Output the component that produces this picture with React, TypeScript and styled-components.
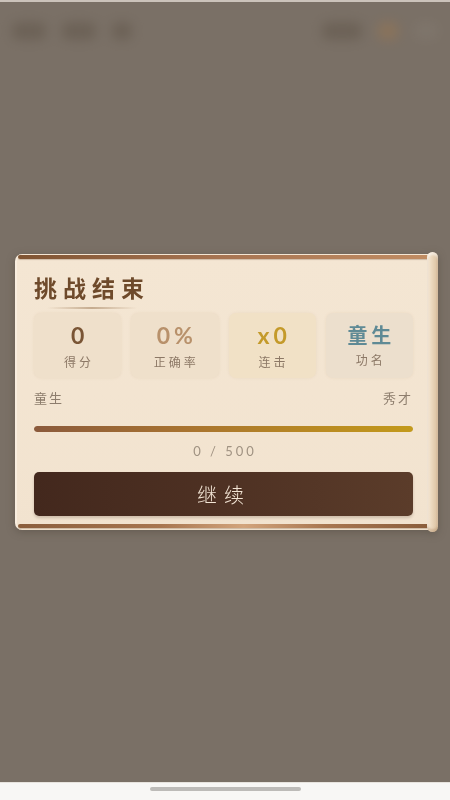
import React from 'react';
import styled, {createGlobalStyle} from "styled-components";

const GlobalStyle = createGlobalStyle`
  html, body {
    margin: 0;
    padding: 0;
    height: 100%;
  }
  body {
    font-family: "Noto Sans CJK SC", "Noto Sans", sans-serif;
  }
  #root {
    height: 100%;
  }
`

const stats = [
    {value: '0', label: '得分', color: '#7a5535', tint: '#efe0cb', big: false},
    {value: '0%', label: '正确率', color: '#b8916b', tint: '#efe0cb', big: false},
    {value: 'x0', label: '连击', color: '#c49a2a', tint: '#f1e1c6', big: false},
    {value: '童生', label: '功名', color: '#5f8a95', tint: '#ecdfcd', big: true},
]

const App = () => {
    return (
        <>
            <GlobalStyle/>
            <Screen>
                <Stage>
                    <BlurHeader>
                        <Blob w={34}/>
                        <Blob w={34}/>
                        <Blob w={20}/>
                        <Spacer/>
                        <Blob w={40}/>
                        <Blob w={20} warm/>
                        <Blob w={24} faint/>
                    </BlurHeader>
                    <Scroll>
                        <Paper>
                            <Rod/>
                            <Content>
                                <Title>挑战结束</Title>
                                <Divider/>
                                <StatGrid>
                                    {stats.map(s => (
                                        <StatBox key={s.label} tint={s.tint}>
                                            <StatValue color={s.color} big={s.big}>{s.value}</StatValue>
                                            <StatLabel big={s.big}>{s.label}</StatLabel>
                                        </StatBox>
                                    ))}
                                </StatGrid>
                                <RankRow>
                                    <span>童生</span>
                                    <span>秀才</span>
                                </RankRow>
                                <Progress>
                                    <ProgressFill/>
                                </Progress>
                                <Count>0 / 500</Count>
                                <ContinueButton>继续</ContinueButton>
                            </Content>
                            <Rod bottom/>
                        </Paper>
                        <Roller/>
                    </Scroll>
                </Stage>
                <HomeBar>
                    <Indicator/>
                </HomeBar>
            </Screen>
        </>
    );
};

export default App;

const Screen = styled.div`
  display: flex;
  flex-direction: column;
  height: 100vh;
  width: 100%;
  overflow: hidden;
`
const Stage = styled.main`
  flex: 1;
  display: grid;
  background: #7a7066;
  border-top: 2px solid #cbc3bb;
  & > * {
    grid-area: 1 / 1;
  }
`
const BlurHeader = styled.div`
  align-self: start;
  display: flex;
  align-items: center;
  gap: 16px;
  height: 22px;
  margin-top: 18px;
  padding: 0 12px;
  filter: blur(6px);
  opacity: 0.5;
`
const Blob = styled.div<{ w: number, warm?: boolean, faint?: boolean }>`
  width: ${p => p.w}px;
  height: 18px;
  border-radius: 6px;
  background: ${p => p.warm ? '#9a7650' : p.faint ? '#837a70' : '#5f5448'};
`
const Spacer = styled.div`
  flex: 1;
`
const Scroll = styled.div`
  align-self: center;
  justify-self: start;
  display: flex;
  width: 423px;
  margin-left: 15px;
  filter: drop-shadow(0 2px 4px rgba(40, 30, 20, 0.25));
`
const Paper = styled.div`
  flex: 1;
  display: flex;
  flex-direction: column;
  background: linear-gradient(180deg, #f4e6d3 0%, #f2e3cf 100%);
  border-radius: 7px 0 0 7px;
  border-left: 2px solid #f8eddf;
  padding: 1px 0 2px 0;
`
const Rod = styled.div<{ bottom?: boolean }>`
  height: 4px;
  margin-left: 1px;
  border-radius: 2px 0 0 2px;
  background: ${p => p.bottom
          ? 'linear-gradient(90deg, #8b5e3c 0%, #a87650 35%, #d2a47c 55%, #a87650 75%, #8b5e3c 100%)'
          : 'linear-gradient(90deg, #7f5432 0%, #a77552 50%, #c08c62 100%)'};
  box-shadow: 0 1px 1px rgba(90, 60, 30, 0.25);
`
const Roller = styled.div`
  width: 11px;
  margin: -2px 0 -2px -1px;
  border-radius: 6px;
  background: linear-gradient(90deg, #f6ead9 0%, #ecd9bf 40%, #e0c8a9 80%, #d0b492 100%);
  box-shadow: inset 0 3px 2px rgba(255, 255, 255, 0.5), inset 0 -3px 2px rgba(160, 120, 80, 0.3);
`
const Content = styled.div`
  display: flex;
  flex-direction: column;
  padding: 13px 15px 8px 17px;
`
const Title = styled.h2`
  margin: 0;
  font-size: 23px;
  line-height: 30px;
  font-weight: 700;
  letter-spacing: 6px;
  color: #6e4a2b;
`
const Divider = styled.div`
  height: 2px;
  width: 90px;
  margin: 5px 0 4px 13px;
  background: linear-gradient(90deg, rgba(140, 100, 60, 0) 0%, rgba(140, 100, 60, 0.45) 50%, rgba(140, 100, 60, 0) 100%);
`
const StatGrid = styled.div`
  display: grid;
  grid-template-columns: repeat(4, 1fr);
  gap: 10px;
`
const StatBox = styled.div<{ tint: string }>`
  display: flex;
  flex-direction: column;
  align-items: center;
  height: 65px;
  box-sizing: border-box;
  padding-top: 10px;
  border-radius: 7px;
  background: ${p => p.tint};
  box-shadow: 0 0 3px rgba(170, 130, 90, 0.12);
`
const StatValue = styled.div<{ color: string, big: boolean }>`
  font-family: ${p => p.big ? '"Noto Sans CJK SC", sans-serif' : '"Lato", "Noto Sans CJK SC", sans-serif'};
  font-size: ${p => p.big ? '20px' : '23px'};
  height: 24px;
  line-height: 24px;
  font-weight: 700;
  letter-spacing: 4px;
  padding-left: 4px;
  color: ${p => p.color};
`
const StatLabel = styled.div<{ big: boolean }>`
  margin-top: ${p => p.big ? '5px' : '7px'};
  font-size: 12px;
  line-height: 16px;
  letter-spacing: 3px;
  padding-left: 3px;
  color: #8c7866;
`
const RankRow = styled.div`
  display: flex;
  justify-content: space-between;
  margin-top: 11px;
  font-size: 13px;
  line-height: 18px;
  letter-spacing: 2px;
  color: #8d7d6d;
`
const Progress = styled.div`
  height: 6px;
  margin-top: 19px;
  border-radius: 3px;
  background: #e4d3bc;
  overflow: hidden;
`
const ProgressFill = styled.div`
  height: 100%;
  width: 100%;
  border-radius: 3px;
  background: linear-gradient(90deg, #8b5a3c 0%, #a87330 40%, #b98a22 75%, #c39a1c 100%);
`
const Count = styled.div`
  margin-top: 10px;
  text-align: center;
  font-family: "Lato", sans-serif;
  font-size: 13px;
  line-height: 18px;
  letter-spacing: 3px;
  padding-left: 3px;
  color: #a09282;
`
const ContinueButton = styled.button`
  margin-top: 12px;
  height: 44px;
  border: none;
  border-radius: 5px;
  background: linear-gradient(90deg, #43281d 0%, #4e3123 50%, #5b3c2a 100%);
  color: #f2e4d4;
  font-family: "Noto Sans CJK SC", sans-serif;
  font-size: 20px;
  font-weight: 300;
  letter-spacing: 7px;
  padding-left: 7px;
  box-shadow: 0 2px 3px rgba(60, 35, 20, 0.2);
`
const HomeBar = styled.div`
  height: 17px;
  flex-shrink: 0;
  display: flex;
  justify-content: center;
  background: #f8f7f5;
  border-top: 1px solid #e8e4de;
`
const Indicator = styled.div`
  width: 151px;
  height: 4px;
  margin-top: 4px;
  border-radius: 2px;
  background: #bdbbb8;
`
